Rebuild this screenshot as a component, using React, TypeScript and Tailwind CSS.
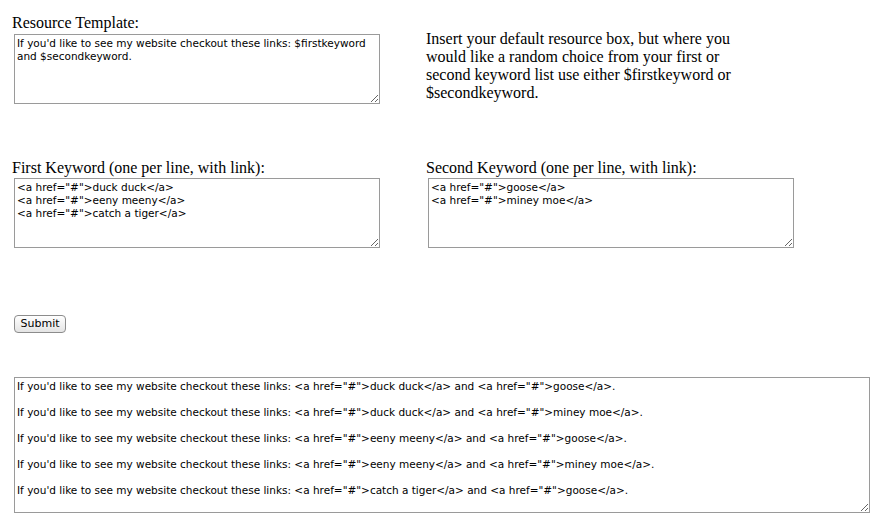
const template =
  "If you'd like to see my website checkout these links: $firstkeyword and $secondkeyword."

const firstKeywords = [
  '<a href="#">duck duck</a>',
  '<a href="#">eeny meeny</a>',
  '<a href="#">catch a tiger</a>',
]

const secondKeywords = ['<a href="#">goose</a>', '<a href="#">miney moe</a>']

const results = [
  [0, 0],
  [0, 1],
  [1, 0],
  [1, 1],
  [2, 0],
]
  .map(([a, b]) =>
    template.replace('$firstkeyword', firstKeywords[a]).replace('$secondkeyword', secondKeywords[b])
  )
  .join('\n\n')

const areaClass =
  'block resize border border-[#9a9a9a] bg-white px-[2px] pt-[2px] pb-0 font-["DejaVu_Sans",sans-serif] text-[10.5px] leading-[13px] text-black outline-none'

export default function App() {
  return (
    <div className='min-h-[525px] w-[884px] bg-white pl-3 pt-[14px] font-["Liberation_Serif",serif] text-[16px] leading-[18px] text-black'>
      <div className="grid grid-cols-[414px_1fr]">
        <div>
          <label className="block">Resource Template:</label>
          <textarea
            readOnly
            defaultValue={template}
            className={`${areaClass} ml-[2px] mt-[2px] h-[70px] w-[366px]`}
          />
        </div>
        <p className="mt-[16px] w-[310px]">
          Insert your default resource box, but where you would like a random choice from your first or
          second keyword list use either $firstkeyword or $secondkeyword.
        </p>
      </div>

      <div className="mt-[55px] grid grid-cols-[414px_1fr]">
        <div>
          <label className="block">First Keyword (one per line, with link):</label>
          <textarea
            readOnly
            defaultValue={firstKeywords.join('\n')}
            className={`${areaClass} ml-[2px] mt-px h-[70px] w-[366px]`}
          />
        </div>
        <div>
          <label className="block">Second Keyword (one per line, with link):</label>
          <textarea
            readOnly
            defaultValue={secondKeywords.join('\n')}
            className={`${areaClass} ml-[2px] mt-px h-[70px] w-[366px]`}
          />
        </div>
      </div>

      <button
        type="button"
        className='ml-[2px] mt-[67px] block h-[18px] w-[52px] rounded-[4px] border border-[#8c8c8c] bg-gradient-to-b from-white to-[#e4e4e4] font-["DejaVu_Sans",sans-serif] text-[11px] leading-[16px] text-black'
      >
        Submit
      </button>

      <textarea
        readOnly
        defaultValue={results}
        className={`${areaClass} ml-[2px] mt-[44px] h-[136px] w-[856px]`}
      />
    </div>
  )
}
